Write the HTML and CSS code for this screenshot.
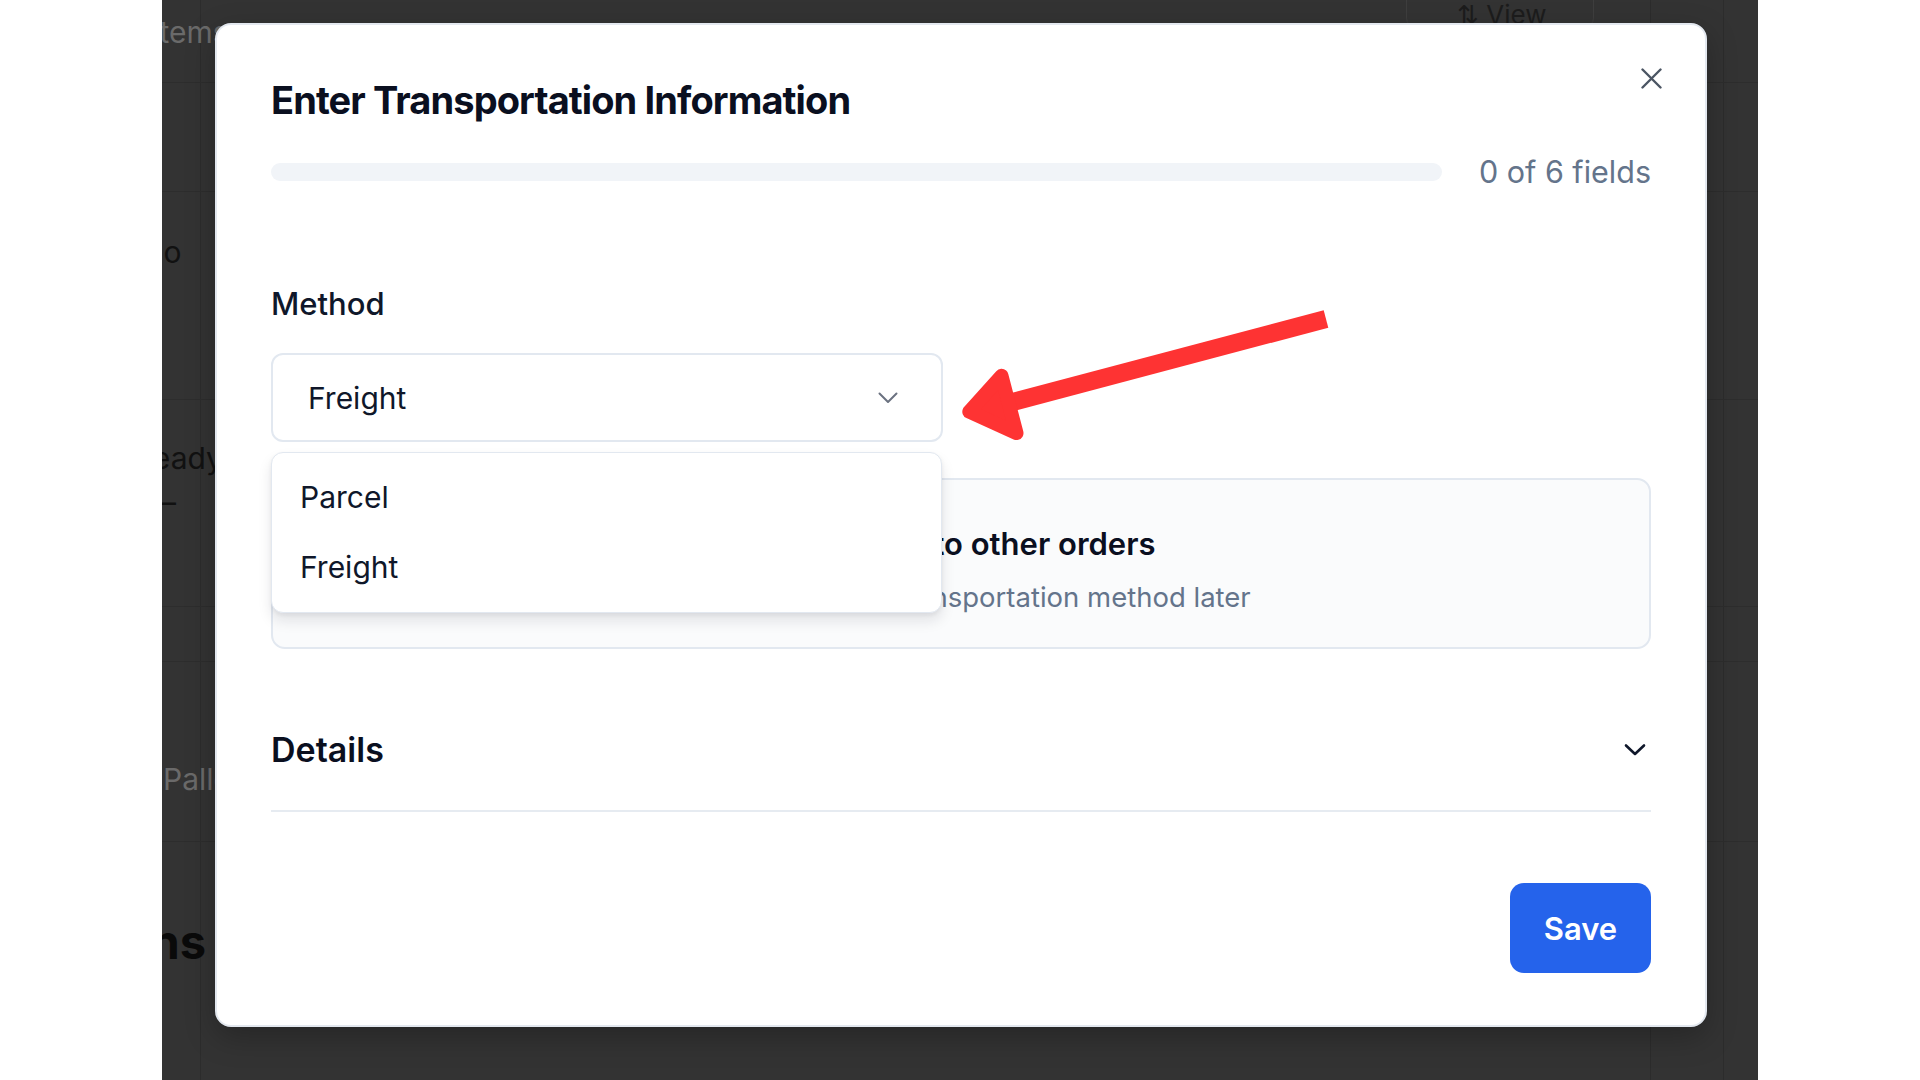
FILE: index.html
```html
<!DOCTYPE html>
<html lang="en">
<head>
<meta charset="utf-8">
<title>Enter Transportation Information</title>
<link rel="stylesheet" href="styles.css">
</head>
<body>
<div class="stage">
  <div class="page">
    <div class="page-top">
      <span class="page-title">Items</span>
      <span class="top-btn">&#8645; View</span>
    </div>
    <div class="page-rows">
      <div class="row row-a"></div>
      <div class="row row-b"><span class="cell-text">No</span></div>
      <div class="row row-c"><span class="cell-text">Ready</span><span class="cell-text dash">&ndash;</span></div>
      <div class="row row-d"></div>
      <div class="row row-e"><span class="cell-text muted">Pallet</span></div>
      <div class="row row-f"><span class="section-head">Options</span></div>
    </div>
  </div>

  <div class="modal" role="dialog" aria-labelledby="modal-title">
    <button class="close-btn" aria-label="Close">
      <svg width="21" height="21" viewBox="0 0 21 21"><path d="M1.5 1.5 L19.5 19.5 M19.5 1.5 L1.5 19.5" stroke="#4b5563" stroke-width="2.4" stroke-linecap="round" fill="none"/></svg>
    </button>
    <h2 class="modal-title" id="modal-title">Enter Transportation Information</h2>

    <div class="progress-row">
      <div class="progress-track"><div class="progress-fill" style="width:0%"></div></div>
      <span class="progress-label">0 of 6 fields</span>
    </div>

    <div class="field-label">Method</div>
    <div class="select-wrap">
      <div class="select">
        <span class="select-value">Freight</span>
        <svg class="select-chevron" width="20" height="12" viewBox="0 0 20 12"><path d="M1.5 1.5 L10 10 L18.5 1.5" stroke="#6b7280" stroke-width="2" fill="none" stroke-linecap="round" stroke-linejoin="round"/></svg>
      </div>
      <ul class="menu">
        <li class="menu-item">Parcel</li>
        <li class="menu-item">Freight</li>
      </ul>
    </div>

    <div class="apply-card">
      <span class="checkbox"></span>
      <div class="apply-text">
        <div class="apply-title">Apply the same transportation method to other orders</div>
        <div class="apply-desc">You can always update each order's own transportation method later</div>
      </div>
    </div>

    <div class="details">
      <span class="details-title">Details</span>
      <svg width="22" height="14" viewBox="0 0 22 14"><path d="M2 2.5 L11 11 L20 2.5" stroke="#0f172a" stroke-width="2.6" fill="none" stroke-linecap="round" stroke-linejoin="round"/></svg>
    </div>

    <div class="modal-footer">
      <button class="save-btn">Save</button>
    </div>
  </div>
</div>

<svg class="annotation" width="1920" height="1080" viewBox="0 0 1920 1080">
  <line x1="1326" y1="319" x2="1005" y2="404" stroke="#fe3333" stroke-width="18"/>
  <polygon points="969.3,411.7 1001.5,375.8 1016.5,433.1" fill="#fe3333" stroke="#fe3333" stroke-width="14" stroke-linejoin="round"/>
</svg>
</body>
</html>
```

FILE: styles.css
```css
* {
  box-sizing: border-box;
}

html, body {
  margin: 0;
  padding: 0;
}

body {
  width: 1920px;
  height: 1080px;
  background: #ffffff;
  display: flex;
  justify-content: center;
  font-family: Inter, "Noto Sans", Arial, sans-serif;
  overflow: hidden;
  position: relative;
}

/* dimmed application behind the dialog */
.stage {
  width: 1596px;
  height: 1080px;
  background: #333333;
  position: relative;
  overflow: hidden;
}

/* faint table column rules of the page underneath */
.page {
  width: 100%;
  height: 100%;
  background-image:
    linear-gradient(#2c2c2c, #2c2c2c),
    linear-gradient(#2c2c2c, #2c2c2c),
    linear-gradient(#2c2c2c, #2c2c2c);
  background-size: 1px 100%, 1px 100%, 1px 100%;
  background-position: 38px 0, 1488px 0, 1561px 0;
  background-repeat: no-repeat;
}

.page-top {
  height: 83px;
  display: flex;
  align-items: flex-start;
  border-bottom: 1px solid #2d2d2d;
}

.page-title {
  margin-left: -11px;
  margin-top: 14px;
  font-size: 30px;
  line-height: 36px;
  color: #6a6a6a;
}

.top-btn {
  margin-left: auto;
  margin-right: 164px;
  margin-top: -14px;
  width: 188px;
  height: 42px;
  border: 1px solid #3e3e3e;
  border-radius: 10px;
  padding: 12px 0 0 50px;
  font-size: 26px;
  color: #1c1c1c;
}

.page-rows {
  display: flex;
  flex-direction: column;
}

.row {
  border-bottom: 1px solid #2d2d2d;
  display: flex;
  flex-direction: column;
}

.row-a { height: 109px; }
.row-b { height: 208px; }
.row-c { height: 207px; }
.row-d { height: 55px; }
.row-e { height: 180px; }
.row-f { height: 238px; border-bottom: none; }

.cell-text {
  font-size: 30px;
  line-height: 36px;
  color: #111;
  white-space: nowrap;
}

.row-b .cell-text { margin-top: 42px; margin-left: -21px; }
.row-c .cell-text { margin-top: 40px; margin-left: -28px; }
.row-c .dash { margin-top: 8px; margin-left: -1px; }
.row-e .cell-text { margin-top: 99px; margin-left: 1px; color: #6a6a6a; }

.section-head {
  margin-top: 72px;
  margin-left: -136px;
  font-size: 47px;
  font-weight: 700;
  line-height: 56px;
  color: #0a0a0a;
  white-space: nowrap;
}

/* dialog */
.modal {
  position: absolute;
  top: 23px;
  left: 53px;
  width: 1492px;
  border: 2px solid #e3e8ef;
  border-radius: 16px;
  background: #ffffff;
  padding: 52px 54px 52px;
  box-shadow: 0 10px 30px rgba(0, 0, 0, 0.25);
}

.close-btn {
  position: absolute;
  top: 43px;
  right: 43px;
  width: 21px;
  height: 21px;
  padding: 0;
  border: none;
  background: none;
  display: flex;
}

.modal-title {
  margin: 0;
  font-size: 38px;
  line-height: 46px;
  font-weight: 700;
  letter-spacing: -0.9px;
  color: #0a0f1f;
}

.progress-row {
  margin-top: 29px;
  height: 40px;
  display: flex;
  align-items: center;
  gap: 37px;
}

.progress-track {
  flex: 1;
  height: 18px;
  border-radius: 9px;
  background: #f1f4f8;
  overflow: hidden;
}

.progress-fill {
  height: 100%;
  background: #2563eb;
}

.progress-label {
  font-size: 30.5px;
  line-height: 40px;
  color: #64748b;
  white-space: nowrap;
}

.field-label {
  margin-top: 92px;
  font-size: 31px;
  line-height: 40px;
  font-weight: 500;
  color: #0f172a;
}

.select-wrap {
  position: relative;
  margin-top: 29px;
  width: 672px;
}

.select {
  height: 89px;
  border: 2px solid #e2e8f0;
  border-radius: 12px;
  display: flex;
  align-items: center;
  justify-content: space-between;
  padding: 0 43px 0 35px;
}

.select-value {
  font-size: 30px;
  color: #0f172a;
}

.menu {
  position: absolute;
  top: calc(100% + 10px);
  left: 0;
  width: 671px;
  margin: 0;
  padding: 9px 0 10px;
  list-style: none;
  background: #ffffff;
  border: 1px solid #e2e8f0;
  border-radius: 12px;
  box-shadow: 0 8px 14px rgba(15, 23, 42, 0.10), 0 2px 4px rgba(15, 23, 42, 0.06);
  z-index: 2;
}

.menu-item {
  height: 70px;
  display: flex;
  align-items: center;
  padding-left: 28px;
  font-size: 30px;
  color: #0f172a;
}

.apply-card {
  margin-top: 36px;
  height: 171px;
  border: 2px solid #e2e8f0;
  border-radius: 14px;
  background: #fafbfc;
  display: flex;
  align-items: flex-start;
  padding: 45px 24px 0;
  gap: 12px;
}

.checkbox {
  margin-top: 20px;
  width: 28px;
  height: 28px;
  border: 2px solid #cbd5e1;
  border-radius: 6px;
  background: #ffffff;
  flex: none;
}

.apply-title {
  margin-left: 12px;
  font-size: 31px;
  line-height: 38px;
  font-weight: 600;
  color: #0a0f1f;
  white-space: nowrap;
}

.apply-desc {
  margin-top: 17px;
  margin-left: 18px;
  font-size: 27.5px;
  line-height: 34px;
  color: #64748b;
  white-space: nowrap;
}

.details {
  margin-top: 80px;
  padding-bottom: 39px;
  border-bottom: 2px solid #e6ebf1;
  display: flex;
  align-items: center;
  justify-content: space-between;
}

.details svg {
  margin-right: 5px;
}

.details-title {
  font-size: 34px;
  line-height: 42px;
  font-weight: 600;
  color: #0a0f1f;
}

.modal-footer {
  margin-top: 71px;
  display: flex;
  justify-content: flex-end;
}

.save-btn {
  width: 141px;
  height: 90px;
  border: none;
  border-radius: 14px;
  background: #2563eb;
  color: #ffffff;
  font-family: inherit;
  font-size: 31px;
  font-weight: 600;
}

/* callout arrow drawn over the screen */
.annotation {
  position: absolute;
  top: 0;
  left: 0;
  pointer-events: none;
}
```
